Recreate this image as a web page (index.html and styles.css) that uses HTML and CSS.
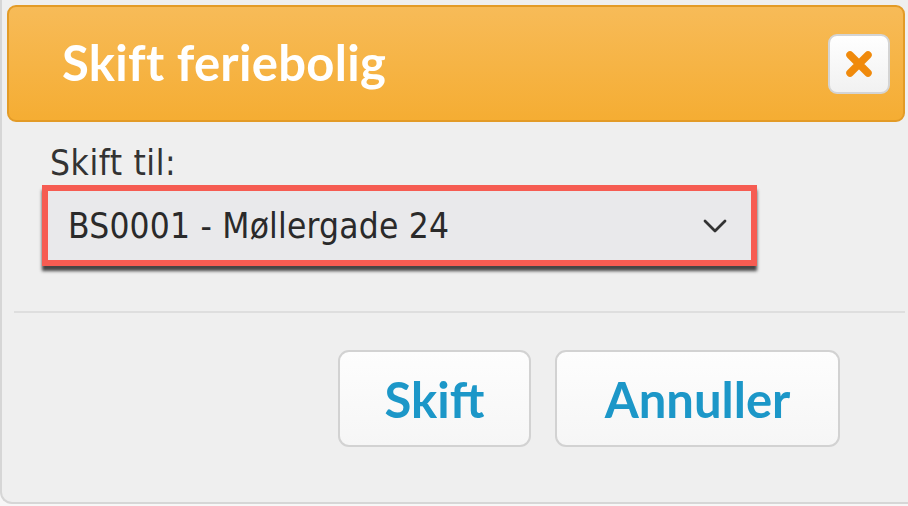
FILE: index.html
```html
<!DOCTYPE html>
<html lang="da">
<head>
  <meta charset="UTF-8">
  <title>Skift feriebolig</title>
  <link rel="stylesheet" href="styles.css">
</head>
<body>
  <div class="dialog">
    <div class="dialog-header">
      <h1>Skift feriebolig</h1>
      <button class="close" title="Luk">
        <svg width="32" height="32" viewBox="0 0 32 32">
          <path d="M7 7 L25 25 M25 7 L7 25" stroke="#f08a0c" stroke-width="7.5" stroke-linecap="round"/>
        </svg>
      </button>
    </div>

    <div class="dialog-body">
      <label class="field-label">Skift til:</label>
      <div class="select-box">
        <span class="select-value">BS0001 - Møllergade 24</span>
        <svg class="chevron" width="24" height="14" viewBox="0 0 24 14">
          <path d="M2 2 L12 12 L22 2" fill="none" stroke="#333" stroke-width="2.8" stroke-linecap="round" stroke-linejoin="round"/>
        </svg>
      </div>
    </div>

    <div class="dialog-footer">
      <button class="btn">Skift</button>
      <button class="btn btn-wide">Annuller</button>
    </div>
  </div>
</body>
</html>
```

FILE: styles.css
```css
body {
  margin: 0;
  background: #f7f7f7;
  font-family: "DejaVu Sans Condensed", "DejaVu Sans", sans-serif;
}
.dialog {
  height: 504px;
  background: #efefef;
  border-left: 2px solid #d6d6d6;
  border-bottom: 2px solid #d6d6d6;
  border-bottom-left-radius: 12px;
  padding: 5px 3px 0 5px;
  box-sizing: border-box;
}
.dialog-header {
  height: 117px;
  box-sizing: border-box;
  border: 2px solid #e39b27;
  border-radius: 9px;
  background: linear-gradient(#f7bb58, #f5ad33);
  display: flex;
  align-items: center;
  justify-content: space-between;
  padding: 0 13px 0 53px;
}
.dialog-header h1 {
  margin: 0 0 4px;
  color: #fff;
  font-family: Lato, sans-serif;
  font-weight: bold;
  font-size: 49px;
  letter-spacing: 0.3px;
}
.close {
  width: 62px;
  height: 60px;
  border: 2px solid #d4d4d4;
  border-radius: 9px;
  background: linear-gradient(#ffffff, #f1f1f1);
  display: flex;
  align-items: center;
  justify-content: center;
  padding: 0;
}
.dialog-body {
  padding: 22px 0 0 35px;
  width: 715px;
}
.field-label {
  display: block;
  color: #333;
  font-size: 35px;
  line-height: 38px;
  padding-left: 8px;
  letter-spacing: 0.6px;
}
.select-box {
  margin-top: 3px;
  height: 81px;
  box-sizing: border-box;
  border: 6px solid #f65c52;
  background: #e9e9eb;
  box-shadow: 0 5px 3px rgba(40, 40, 40, 0.85);
  display: flex;
  align-items: center;
  justify-content: space-between;
  padding: 0 24px 0 20px;
}
.select-value {
  color: #2a2a2a;
  font-size: 35px;
  letter-spacing: 0.2px;
}
.dialog-footer {
  margin: 45px 0 0 7px;
  border-top: 2px solid #dedede;
  display: flex;
  justify-content: flex-end;
  gap: 24px;
  padding: 37px 65px 0 0;
}
.btn {
  width: 193px;
  height: 97px;
  border: 2px solid #d2d2d2;
  border-radius: 11px;
  background: linear-gradient(#fdfdfd, #f6f6f6);
  color: #1c97c8;
  font-family: Lato, sans-serif;
  font-weight: bold;
  font-size: 49px;
}
.btn-wide {
  width: 285px;
}
```
